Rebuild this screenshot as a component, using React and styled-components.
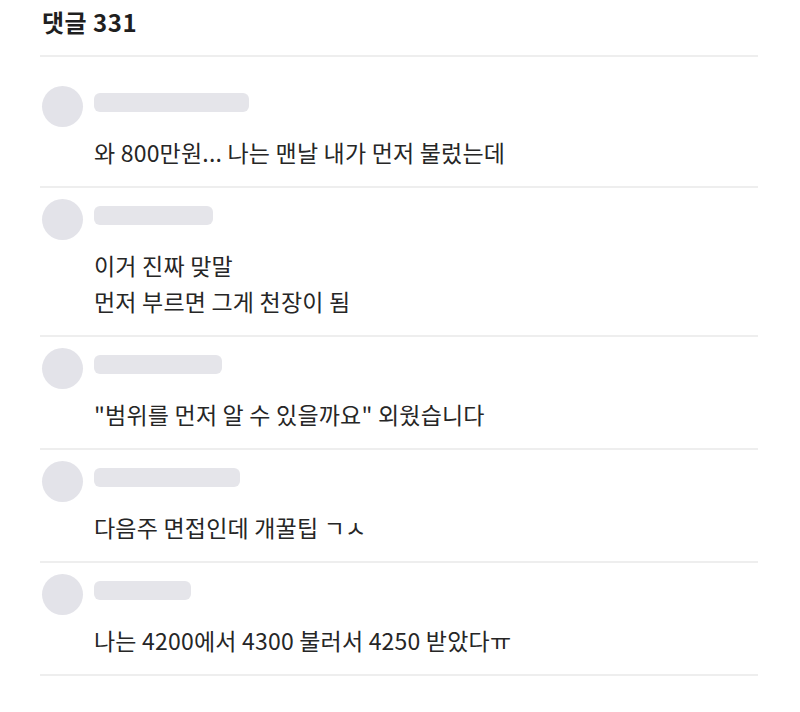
import React from "react";
import styled, { createGlobalStyle } from "styled-components";

const GlobalStyle = createGlobalStyle`
  html, body {
    margin: 0;
    padding: 0;
    background: #ffffff;
  }
  body {
    font-family: "Noto Sans CJK KR", "Noto Sans", sans-serif;
    color: #252525;
  }
`;

const Page = styled.div`
  width: 718px;
  padding: 0 0 0 40px;
`;

const Header = styled.header`
  display: flex;
  align-items: flex-start;
  height: 50px;
  padding: 5px 2px 0;
  border-bottom: 2px solid #eeeeee;
`;

const Title = styled.h2`
  margin: 0;
  font-size: 24px;
  line-height: 34px;
  font-weight: 700;
  color: #1f1f1f;
  letter-spacing: 0.5px;
`;

const List = styled.ul`
  list-style: none;
  margin: 0;
  padding: 18px 0 0;
`;

const Item = styled.li`
  padding: 11px 0 16px 2px;
  border-bottom: 2px solid #eeeeee;
`;

const Author = styled.div`
  display: flex;
  align-items: flex-start;
  gap: 11px;
`;

const Avatar = styled.div`
  width: 41px;
  height: 41px;
  border-radius: 50%;
  background: #e3e3e9;
  flex-shrink: 0;
`;

const NameBar = styled.div`
  width: ${(p) => p.$w}px;
  height: 19px;
  margin-top: 7px;
  border-radius: 6px;
  background: #e5e5ea;
`;

const Body = styled.p`
  margin: 7px 0 0;
  padding-left: 52px;
  font-size: 23px;
  line-height: 36px;
  letter-spacing: 0.2px;
  color: #262626;
  white-space: pre-line;
`;

const comments = [
  { name: 155, text: "와 800만원... 나는 맨날 내가 먼저 불렀는데" },
  { name: 119, text: "이거 진짜 맞말\n먼저 부르면 그게 천장이 됨" },
  { name: 128, text: "\"범위를 먼저 알 수 있을까요\" 외웠습니다" },
  { name: 146, text: "다음주 면접인데 개꿀팁 ㄱㅅ" },
  { name: 97, text: "나는 4200에서 4300 불러서 4250 받았다ㅠ" },
];

export default function App() {
  return (
    <>
      <GlobalStyle />
      <Page>
        <Header>
          <Title>댓글 331</Title>
        </Header>
        <List>
          {comments.map((c, i) => (
            <Item key={i}>
              <Author>
                <Avatar />
                <NameBar $w={c.name} />
              </Author>
              <Body>{c.text}</Body>
            </Item>
          ))}
        </List>
      </Page>
    </>
  );
}
